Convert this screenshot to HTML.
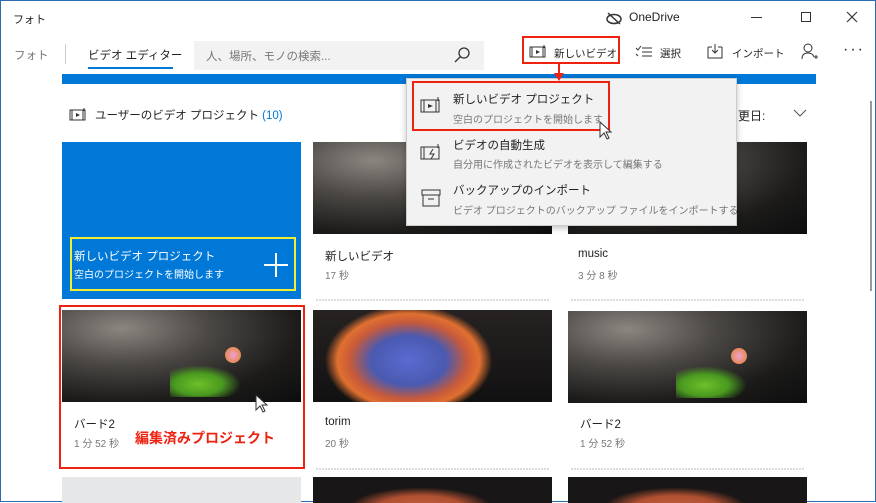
<!DOCTYPE html><html><head><meta charset="utf-8"><style>
*{margin:0;padding:0;box-sizing:border-box}
body{width:876px;height:502px;overflow:hidden;background:#fff;font-family:"Liberation Sans","Noto Sans CJK JP",sans-serif;color:#222;position:relative;border:1px solid #2b6cb0}
.a{position:absolute;white-space:nowrap}
.t{font-size:11.5px}
.s{font-size:10px;color:#777}
.th{position:absolute;background:radial-gradient(ellipse at 25% 20%,#8a8680 0%,#4a4744 35%,#1c1b1a 70%,#0d0d0d 100%)}
.bird:after{content:"";position:absolute;left:45%;top:60%;width:30%;height:35%;background:radial-gradient(ellipse at 40% 60%,#6fbf2a 0,#4a9a20 40%,transparent 70%)}
.blur{position:absolute;background:radial-gradient(ellipse 35% 60% at 40% 55%,#5a6ad0 0,#4a5ab0 45%,#c85a3a 70%,#e07030 85%,transparent 100%),linear-gradient(#262222,#121111)}
.sep{position:absolute;height:2px;background:repeating-linear-gradient(90deg,#ddd 0 2px,#fff 2px 3px)}
</style></head><body>
<div class="a" style="left:12px;top:10px;font-size:11px">フォト</div>
<svg class="a" style="left:604px;top:10px" width="18" height="14"><ellipse cx="9" cy="8" rx="7" ry="4.5" fill="none" stroke="#333" stroke-width="1.5"/><line x1="3" y1="2" x2="15" y2="13" stroke="#333" stroke-width="1.5"/></svg>
<div class="a" style="left:628px;top:9px;font-size:12px">OneDrive</div>
<div class="a" style="left:750px;top:16px;width:11px;height:1px;background:#333"></div>
<div class="a" style="left:800px;top:11px;width:10px;height:10px;border:1px solid #333"></div>
<svg class="a" style="left:845px;top:10px" width="12" height="12"><path d="M1 1L11 11M11 1L1 11" stroke="#333" stroke-width="1.2"/></svg>

<div class="a" style="left:13px;top:46px;font-size:11.5px;color:#777">フォト</div>
<div class="a" style="left:64px;top:43px;width:1px;height:20px;background:#ccc"></div>
<div class="a" style="left:87px;top:46px;font-size:11.5px">ビデオ エディター</div>
<div class="a" style="left:87px;top:66px;width:85px;height:2px;background:#0078d7"></div>
<div class="a" style="left:193px;top:40px;width:290px;height:29px;background:#f2f2f2"></div>
<div class="a" style="left:205px;top:47px;font-size:11.5px;color:#777">人、場所、モノの検索...</div>
<svg class="a" style="left:452px;top:45px" width="18" height="18"><circle cx="11" cy="7" r="5" fill="none" stroke="#333" stroke-width="1.3"/><line x1="7.5" y1="10.5" x2="2" y2="16" stroke="#333" stroke-width="1.3"/></svg>

<div class="a" style="left:521px;top:35px;width:98px;height:28px;border:2px solid #e21"></div>
<svg class="a" style="left:528px;top:43px" width="18" height="14"><rect x="1" y="3" width="15" height="10" fill="none" stroke="#333"/><path d="M3 3v10M14 3v10M15 1v3" stroke="#333"/><path d="M7 6l4 2-4 2z" fill="#333"/></svg>
<div class="a" style="left:553px;top:45px;font-size:10.5px">新しいビデオ</div>
<svg class="a" style="left:634px;top:44px" width="18" height="14"><path d="M1 3l2 2 3-4M7 3h10M7 7h10M7 11h10M1 9l2 2" stroke="#333" fill="none"/></svg>
<div class="a" style="left:659px;top:45px;font-size:10.5px">選択</div>
<svg class="a" style="left:706px;top:42px" width="16" height="16"><path d="M1 4v11h14V4M5 4H1M15 4h-4M8 1v9M5 7l3 3 3-3" stroke="#333" fill="none"/></svg>
<div class="a" style="left:731px;top:45px;font-size:10.5px">インポート</div>
<svg class="a" style="left:800px;top:42px" width="18" height="18"><circle cx="7" cy="5" r="4" fill="none" stroke="#333"/><path d="M1 16c0-5 3-6 6-6s5 1 6 4M13 14h4M15 12v4" stroke="#333" fill="none"/></svg>
<div class="a" style="left:842px;top:40px;font-size:16px;letter-spacing:2px">···</div>

<div class="a" style="left:61px;top:73px;width:754px;height:10px;background:#0078d7"></div>
<svg class="a" style="left:68px;top:106px" width="18" height="14"><rect x="1" y="3" width="15" height="10" fill="none" stroke="#333"/><path d="M3 3v10M14 3v10M15 1v3" stroke="#333"/><path d="M7 6l4 2-4 2z" fill="#333"/></svg>
<div class="a" style="left:94px;top:106px;font-size:11.5px">ユーザーのビデオ プロジェクト <span style="color:#0078d7">(10)</span></div>
<div class="a" style="left:737px;top:106px;font-size:12px">更日:</div>
<svg class="a" style="left:792px;top:108px" width="14" height="9"><path d="M1 1l6 6 6-6" stroke="#555" fill="none"/></svg>
<div class="a" style="left:869px;top:100px;width:2px;height:190px;background:#999"></div>

<!-- row1 -->
<div class="a" style="left:61px;top:141px;width:239px;height:157px;background:#0078d7"></div>
<div class="a" style="left:69px;top:236px;width:226px;height:54px;border:2px solid #ee3"></div>
<div class="a" style="left:73px;top:247px;font-size:11.5px;color:#fff">新しいビデオ プロジェクト</div>
<div class="a" style="left:73px;top:265px;font-size:10px;color:#fff">空白のプロジェクトを開始します</div>
<div class="a" style="left:263px;top:263px;width:24px;height:1.5px;background:#fff"></div>
<div class="a" style="left:274px;top:252px;width:1.5px;height:24px;background:#fff"></div>
<div class="th" style="left:312px;top:141px;width:239px;height:92px"></div>
<div class="th" style="left:567px;top:141px;width:239px;height:92px"></div>
<div class="a t" style="left:324px;top:247px">新しいビデオ</div><div class="a s" style="left:324px;top:266px">17 秒</div>
<div class="a t" style="left:577px;top:247px">music</div><div class="a s" style="left:577px;top:266px">3 分 8 秒</div>
<div class="sep" style="left:315px;top:298px;width:233px"></div>
<div class="sep" style="left:570px;top:298px;width:233px"></div>
<!-- row2 -->
<div class="th bird" style="left:61px;top:309px;width:239px;height:92px"></div>
<div class="a" style="left:224px;top:346px;width:16px;height:16px;border-radius:50%;background:radial-gradient(#f0a0d0,#e08020)"></div>
<div class="blur" style="left:312px;top:309px;width:239px;height:92px"></div>
<div class="th bird" style="left:567px;top:310px;width:239px;height:92px"></div>
<div class="a" style="left:730px;top:347px;width:16px;height:16px;border-radius:50%;background:radial-gradient(#f0a0d0,#e08020)"></div>
<div class="a" style="left:58px;top:304px;width:246px;height:164px;border:2px solid #e21"></div>
<div class="a t" style="left:73px;top:415px">バード2</div><div class="a s" style="left:73px;top:434px">1 分 52 秒</div>
<div class="a" style="left:134px;top:427px;font-size:14px;font-weight:bold;color:#e21">編集済みプロジェクト</div>
<div class="a t" style="left:324px;top:415px">torim</div><div class="a s" style="left:324px;top:434px">20 秒</div>
<div class="a t" style="left:579px;top:415px">バード2</div><div class="a s" style="left:579px;top:434px">1 分 52 秒</div>
<div class="sep" style="left:315px;top:467px;width:233px"></div>
<div class="sep" style="left:570px;top:467px;width:233px"></div>
<!-- row3 -->
<div class="a" style="left:61px;top:476px;width:239px;height:26px;background:#e6e7e8"></div>
<div class="a" style="left:312px;top:476px;width:239px;height:26px;background:radial-gradient(ellipse 30% 80% at 45% 120%,#c06040 0,#b05030 60%,transparent 100%),#181616"></div>
<div class="a" style="left:567px;top:476px;width:239px;height:26px;background:radial-gradient(ellipse 30% 80% at 45% 120%,#c06040 0,#b05030 60%,transparent 100%),#181616"></div>

<!-- menu -->
<div class="a" style="left:405px;top:77px;width:331px;height:148px;background:#f2f2f2;border:1px solid #ccc;box-shadow:0 2px 6px rgba(0,0,0,.25)"></div>
<div class="a" style="left:411px;top:80px;width:198px;height:50px;border:2px solid #e21"></div>
<svg class="a" style="left:418px;top:95px" width="22" height="18"><rect x="2" y="4" width="18" height="12" fill="none" stroke="#333"/><path d="M5 4v12M17 4v12M19 1v4" stroke="#333"/><path d="M9 8l5 2-5 2z" fill="#333"/></svg>
<div class="a" style="left:452px;top:90px;font-size:11.5px">新しいビデオ プロジェクト</div>
<div class="a s" style="left:452px;top:110px">空白のプロジェクトを開始します</div>
<svg class="a" style="left:418px;top:142px" width="22" height="18"><rect x="2" y="4" width="18" height="12" fill="none" stroke="#333"/><path d="M5 4v12M19 1v4M14 6l-3 5h4l-3 5" stroke="#333" fill="none"/></svg>
<div class="a" style="left:452px;top:136px;font-size:11.5px">ビデオの自動生成</div>
<div class="a s" style="left:452px;top:155px">自分用に作成されたビデオを表示して編集する</div>
<svg class="a" style="left:420px;top:188px" width="20" height="18"><rect x="1" y="1" width="18" height="5" fill="none" stroke="#333"/><rect x="2" y="6" width="16" height="11" fill="none" stroke="#333"/><path d="M7 10h6" stroke="#333"/></svg>
<div class="a" style="left:452px;top:181px;font-size:11.5px">バックアップのインポート</div>
<div class="a s" style="left:452px;top:201px">ビデオ プロジェクトのバックアップ ファイルをインポートする</div>
<!-- arrow -->
<div class="a" style="left:557px;top:62px;width:2px;height:12px;background:#e21"></div>
<svg class="a" style="left:553px;top:72px" width="10" height="8"><path d="M0 0h10L5 8z" fill="#e21"/></svg>
<svg class="a" style="left:598px;top:120px" width="14" height="20"><path d="M1 1v15l4-4 3 6 2-1-3-6h5z" fill="#fff" stroke="#333"/></svg>
<svg class="a" style="left:254px;top:393px" width="14" height="20"><path d="M1 1v15l4-4 3 6 2-1-3-6h5z" fill="#fff" stroke="#333"/></svg>
</body></html>
